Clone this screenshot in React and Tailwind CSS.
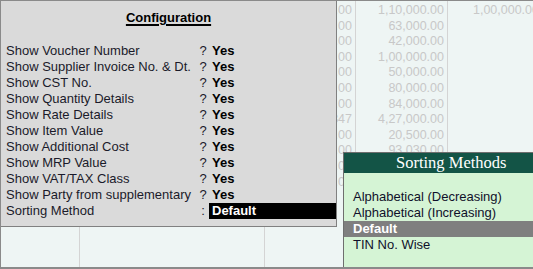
import React from "react";

const rows = [
  ["Show Voucher Number", "?", "Yes"],
  ["Show Supplier Invoice No. & Dt.", "?", "Yes"],
  ["Show CST No.", "?", "Yes"],
  ["Show Quantity Details", "?", "Yes"],
  ["Show Rate Details", "?", "Yes"],
  ["Show Item Value", "?", "Yes"],
  ["Show Additional Cost", "?", "Yes"],
  ["Show MRP Value", "?", "Yes"],
  ["Show VAT/TAX Class", "?", "Yes"],
  ["Show Party from supplementary", "?", "Yes"],
];

const colA = ["1,10,000.00", "63,000.00", "42,000.00", "1,00,000.00", "50,000.00", "80,000.00", "84,000.00", "4,27,000.00", "20,500.00", "93,030.00"];
const colB = ["2,000.00", "3,000.00", "2,000.00", "5,000.00", "1,000.00", "4,000.00", "2,000.00", "2,11,347", "1,000.00", "2,000.00", "1,000.00", "3,000.00"];

export default function App() {
  return (
    <div
      className="relative w-[533px] h-[269px] overflow-hidden bg-[#eef5f4] border-t border-l border-b-2 border-[#8a8a8a] text-[13px] leading-[16px]"
      style={{ fontFamily: '"Liberation Sans", Arial, sans-serif' }}
    >
      {/* background grid columns */}
      <div className="flex h-full">
        <div className="w-[79px] border-r border-[#d4d4d4]" />
        <div className="w-[185px] border-r border-[#d4d4d4]" />
        <div className="w-[91px] border-r border-[#d4d4d4] pt-[2px] pr-[3px] text-right text-[#c8c8c8] text-[12.5px]">
          {colB.map((v, i) => (
            <div key={i} className="h-[15.6px] leading-[15.6px] whitespace-nowrap">{v}</div>
          ))}
        </div>
        <div className="w-[92px] border-r border-[#d4d4d4] pt-[2px] pr-[3px] text-right text-[#c8c8c8] text-[12.5px]">
          {colA.map((v, i) => (
            <div key={i} className="h-[15.6px] leading-[15.6px] whitespace-nowrap">{v}</div>
          ))}
        </div>
        <div className="flex-1 pt-[2px] text-right text-[#c8c8c8] text-[12.5px] whitespace-nowrap overflow-hidden">
          <div className="h-[15.6px] leading-[15.6px] -mr-[6px]">1,00,000.00</div>
        </div>
      </div>

      {/* Configuration panel */}
      <div className="absolute left-0 top-0 w-[336px] h-[226px] bg-[#dadada] border-r border-b border-[#808080] text-[#1a1a2a]">
        <div className="mt-[9px] h-[16px] text-center">
          <span className="font-bold underline underline-offset-2 decoration-[1.5px] text-black">Configuration</span>
        </div>
        <div className="mt-[17px] pl-[5px]">
          {rows.map(([l, q, v], i) => (
            <div key={i} className="flex h-[16px] items-center whitespace-nowrap">
              <div className="w-[191px]">{l}</div>
              <div className="w-[12px] text-center">{q}</div>
              <div className="pl-[3px] font-bold text-black">{v}</div>
            </div>
          ))}
          <div className="flex h-[16px] items-center whitespace-nowrap">
            <div className="w-[191px]">Sorting Method</div>
            <div className="w-[12px] text-center">:</div>
            <div className="w-[127px] h-[16px] bg-black text-white font-bold pl-[3px]">Default</div>
          </div>
        </div>
      </div>

      {/* Sorting Methods popup */}
      <div className="absolute left-[342px] top-[151px] w-[191px] h-[118px] border-l border-t border-r border-[#6e6e6e] bg-[#d5f4d5] text-[#10102a]">
        <div
          className="h-[20px] bg-[#135446] text-white text-[16.5px] leading-[20px] pl-[52px] whitespace-nowrap"
          style={{ fontFamily: '"Liberation Serif", "Times New Roman", serif' }}
        >
          Sorting Methods
        </div>
        <div className="pt-[16px]">
          <div className="h-[16px] pl-[9px] whitespace-nowrap">Alphabetical (Decreasing)</div>
          <div className="h-[16px] pl-[9px] whitespace-nowrap">Alphabetical (Increasing)</div>
          <div className="h-[16px] pl-[9px] bg-[#7f7f7f] text-white font-bold">Default</div>
          <div className="h-[16px] pl-[9px]">TIN No. Wise</div>
        </div>
      </div>
    </div>
  );
}
